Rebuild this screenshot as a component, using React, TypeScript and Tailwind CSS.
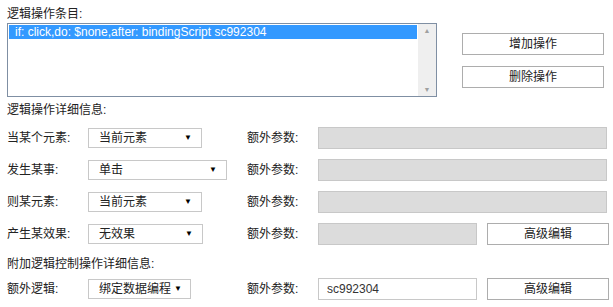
import React from "react";

const font = { fontFamily: '"Liberation Sans", Arial, "Noto Sans CJK SC", sans-serif' };

function Select({ value, width, pr = "pr-[9px]" }: { value: string; width: string; pr?: string }) {
  return (
    <div className={`flex h-[20px] items-center justify-between whitespace-nowrap border border-[#c8c8c8] bg-white pl-[10px] ${pr} ${width}`}>
      <span className="text-[12px] leading-none">{value}</span>
      <span className="text-[8px] leading-none text-black">▼</span>
    </div>
  );
}

function Row({ label, select, extra }: { label: string; select: React.ReactNode; extra: React.ReactNode }) {
  return (
    <div className="grid h-[22px] grid-cols-[81px_159px_71px_1fr] items-center">
      <span className="text-[12px] leading-none">{label}</span>
      <div>{select}</div>
      <span className="text-[12px] leading-none">额外参数:</span>
      <div className="flex">{extra}</div>
    </div>
  );
}

const greyInput = "h-[22px] border border-[#c8c8c8] bg-[#dcdcdc]";
const btn = "flex h-[22px] items-center justify-center border border-[#adadad] bg-white text-[12px] leading-none text-[#222]";

export default function App() {
  return (
    <div className="h-[307px] w-[613px] bg-white pl-[7px] text-[#222]" style={font}>
      <div className="pt-[7px] text-[12px] leading-[15px]">逻辑操作条目:</div>
      <div className="mt-[1px] flex items-start">
        <div className="flex h-[74px] w-[430px] border border-[#7f8fa3]">
          <div className="flex-1 p-[1px]">
            <div className="h-[14px] bg-[#3399ff] pl-[6px] text-[12px] leading-[14px] text-white">
              if: click,do: $none,after: bindingScript sc992304
            </div>
          </div>
          <div className="flex w-[18px] flex-col items-center justify-between bg-[#efefef] py-[3px] text-[7px] leading-none text-[#a0a0a0]">
            <span>▲</span>
            <span>▼</span>
          </div>
        </div>
        <div className="ml-[25px] mt-[10px] flex flex-col gap-[11px]">
          <div className={`${btn} w-[142px]`}>增加操作</div>
          <div className={`${btn} w-[142px]`}>删除操作</div>
        </div>
      </div>
      <div className="mt-[6px] text-[12px] leading-[15px]">逻辑操作详细信息:</div>
      <div className="mt-[9px] flex flex-col gap-[10px]">
        <Row label="当某个元素:" select={<Select value="当前元素" width="w-[114px]" />} extra={<div className={`${greyInput} w-[289px]`} />} />
        <Row label="发生某事:" select={<Select value="单击" width="w-[139px]" />} extra={<div className={`${greyInput} w-[289px]`} />} />
        <Row label="则某元素:" select={<Select value="当前元素" width="w-[114px]" />} extra={<div className={`${greyInput} w-[289px]`} />} />
        <Row
          label="产生某效果:"
          select={<Select value="无效果" width="w-[115px]" />}
          extra={
            <>
              <div className={`${greyInput} w-[159px]`} />
              <div className={`${btn} ml-[10px] w-[122px]`}>高级编辑</div>
            </>
          }
        />
      </div>
      <div className="mt-[12px] text-[12px] leading-[15px]">附加逻辑控制操作详细信息:</div>
      <div className="mt-[6px]">
        <Row
          label="额外逻辑:"
          select={<Select value="绑定数据编程" width="w-[103px]" pr="pr-[8px]" />}
          extra={
            <>
              <div className="flex h-[22px] w-[159px] items-center border border-[#c8c8c8] bg-white pl-[8px] text-[12px] leading-none text-[#333]">sc992304</div>
              <div className={`${btn} ml-[10px] w-[122px]`}>高级编辑</div>
            </>
          }
        />
      </div>
    </div>
  );
}
